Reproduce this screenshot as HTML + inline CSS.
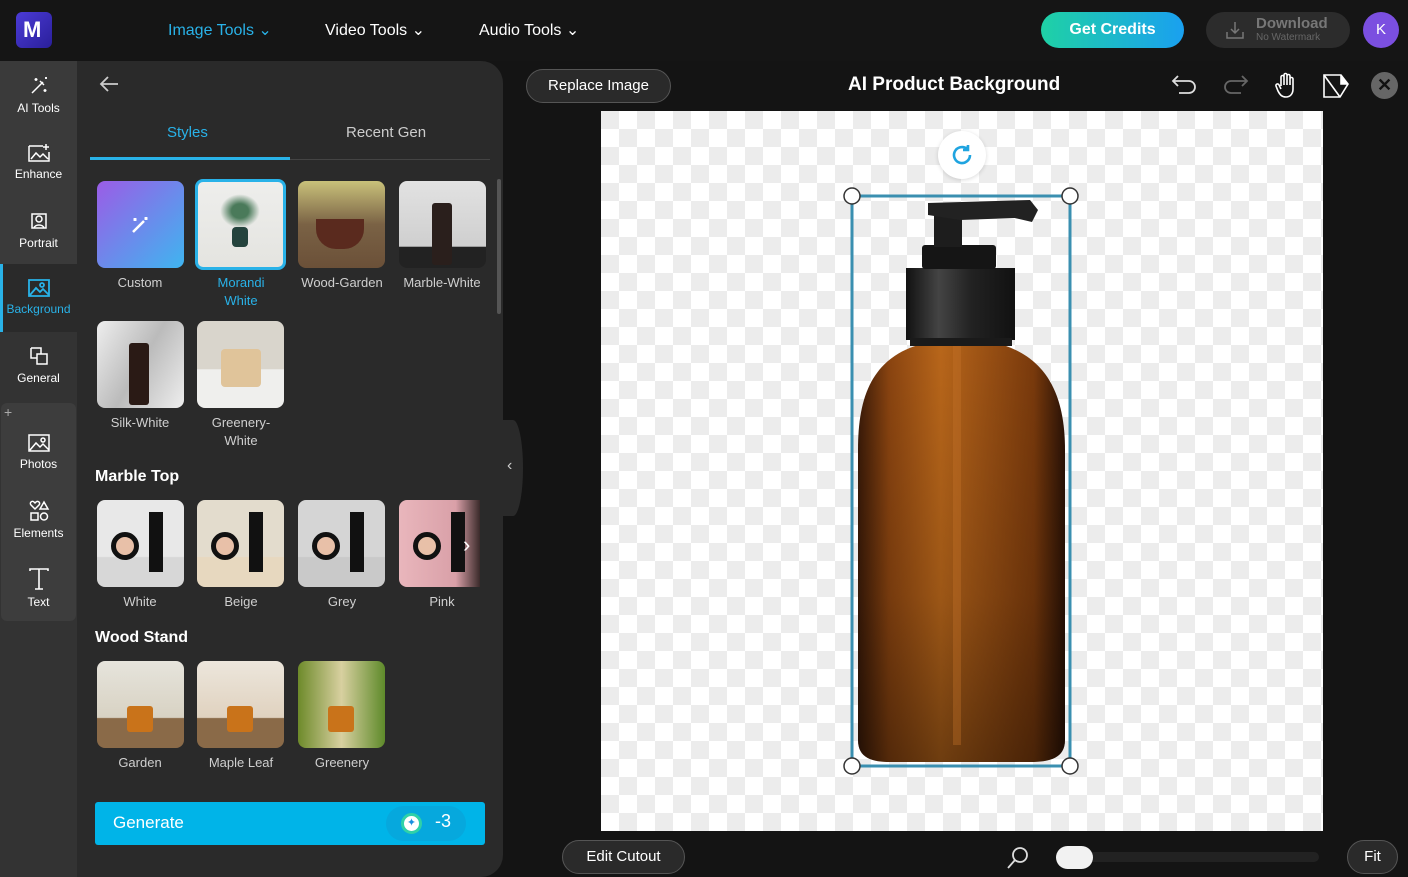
<!DOCTYPE html>
<html><head><meta charset="utf-8"><style>
*{box-sizing:border-box;margin:0;padding:0}
body{width:1408px;height:877px;overflow:hidden;background:#141414;font-family:"Liberation Sans",sans-serif;color:#fff;position:relative}
.abs{position:absolute}
.top{left:0;top:0;width:1408px;height:61px;background:#151515}
.nav{top:20px;font-size:16px;color:#fff}
.rail{left:0;top:61px;width:77px;height:816px;background:#333333}
.ri{position:absolute;left:0;width:77px;text-align:center;font-size:12px;color:#fff}
.ri svg{display:block;margin:0 auto 4px}
.panel{left:77px;top:61px;width:426px;height:816px;background:#2a2a2a;border-top-right-radius:22px;border-bottom-right-radius:22px}
.th{position:absolute;width:87px;height:87px;border-radius:8px;overflow:hidden}
.lb{position:absolute;width:100px;text-align:center;font-size:13px;color:#cfcfcf;line-height:18px}
.h{position:absolute;font-size:16px;font-weight:bold;color:#fff}
.pill{position:absolute;border:1px solid #555;border-radius:18px;background:#2a2a2a;color:#fff;font-size:15px;text-align:center}
.canvas{left:601px;top:111px;width:722px;height:720px;background:conic-gradient(#fff 25%,#ececec 0 50%,#fff 0 75%,#ececec 0);background-size:36px 36px}
</style></head><body>
<div class="abs top"></div>
<div class="abs" style="left:16px;top:12px;width:36px;height:36px;border-radius:6px;background:linear-gradient(135deg,#4b3bd6,#2a1f9a)"><div style="position:absolute;left:7px;top:5px;font-weight:bold;font-size:22px;color:#fff">M</div></div>
<div class="abs nav" style="left:168px;color:#29b2e8">Image Tools ⌄</div>
<div class="abs nav" style="left:325px">Video Tools ⌄</div>
<div class="abs nav" style="left:479px">Audio Tools ⌄</div>
<div class="abs" style="left:1041px;top:12px;width:143px;height:36px;border-radius:18px;background:linear-gradient(90deg,#1fd1a5,#1aa0f0);text-align:center;line-height:36px;font-weight:bold;font-size:16px">Get Credits</div>
<div class="abs" style="left:1206px;top:12px;width:144px;height:36px;border-radius:18px;background:#2c2c2c"><svg class="abs" style="left:19px;top:8px" width="20" height="20" viewBox="0 0 20 20" fill="none" stroke="#777" stroke-width="1.5"><path d="M10 2v11M6 9l4 4 4-4M2 12v6h16v-6"/></svg><div class="abs" style="left:50px;top:3px;font-size:15px;font-weight:bold;color:#777">Download</div><div class="abs" style="left:50px;top:20px;font-size:10px;color:#666">No Watermark</div></div>
<div class="abs" style="left:1363px;top:12px;width:36px;height:36px;border-radius:50%;background:#7b4fe0;text-align:center;line-height:36px;font-size:15px">K</div>

<div class="abs rail"></div>
<div class="abs" style="left:0;top:61px;width:77px;height:203px;background:#3a3a3a"></div>
<div class="ri" style="top:75px"><svg width="22" height="22" viewBox="0 0 22 22" fill="none" stroke="#fff" stroke-width="1.5"><path d="M4 18L15 7M12 6l4 4M8 3v3M6.5 4.5h3M17 14v3M15.5 15.5h3M18 2v2M17 3h2"/></svg>AI Tools</div>
<div class="ri" style="top:143px"><svg width="24" height="20" viewBox="0 0 24 20" fill="none" stroke="#fff" stroke-width="1.5"><path d="M2 3h14M2 3v15h20V9M4 16l5-6 4 4 3-3 5 5M19 1v6M16 4h6"/></svg>Enhance</div>
<div class="ri" style="top:210px"><svg width="22" height="22" viewBox="0 0 22 22" fill="none" stroke="#fff" stroke-width="1.5"><circle cx="11" cy="9" r="3"/><path d="M4 4h14v14H4zM6 18c1-4 9-4 10 0"/></svg>Portrait</div>
<div class="abs" style="left:0;top:264px;width:77px;height:68px;background:#2a2a2a;border-left:3px solid #29b2e8"></div>
<div class="ri" style="top:278px;color:#29b2e8"><svg width="24" height="20" viewBox="0 0 24 20" fill="none" stroke="#29b2e8" stroke-width="1.8"><path d="M2 2h20v16H2zM3 17l6-7 4 4 3-3 6 6"/><circle cx="15" cy="7" r="2"/></svg>Background</div>
<div class="ri" style="top:345px"><svg width="22" height="22" viewBox="0 0 22 22" fill="none" stroke="#fff" stroke-width="1.5"><path d="M3 3h10v6M3 3v10h6M9 9h10v10H9z"/></svg>General</div>
<div class="abs" style="left:1px;top:403px;width:75px;height:218px;background:#3d3d3d;border-radius:6px"></div>
<div class="abs" style="left:4px;top:404px;color:#aaa;font-size:14px">+</div>
<div class="ri" style="top:433px"><svg width="24" height="20" viewBox="0 0 24 20" fill="none" stroke="#fff" stroke-width="1.5"><path d="M2 2h20v16H2zM3 17l6-7 4 4 3-3 6 6"/><circle cx="16" cy="7" r="2"/></svg>Photos</div>
<div class="ri" style="top:500px"><svg width="22" height="22" viewBox="0 0 22 22" fill="none" stroke="#fff" stroke-width="1.5"><path d="M7 9L3 5a2 2 0 013-3l1 1 1-1a2 2 0 013 3zM16 2l4 7h-8zM3 13h7v7H3z"/><circle cx="16" cy="16.5" r="3.5"/></svg>Elements</div>
<div class="ri" style="top:567px"><svg width="22" height="24" viewBox="0 0 22 24" fill="none" stroke="#fff" stroke-width="1.6"><path d="M2 4V2h18v2M11 2v20M7 22h8"/></svg>Text</div>

<div class="abs panel"></div>
<svg class="abs" style="left:98px;top:74px" width="22" height="20" viewBox="0 0 22 20" fill="none" stroke="#ccc" stroke-width="1.8"><path d="M20 10H3M10 3L3 10l7 7"/></svg>
<div class="abs" style="left:167px;top:124px;font-size:15px;color:#29b2e8">Styles</div>
<div class="abs" style="left:346px;top:124px;font-size:15px;color:#ccc">Recent Gen</div>
<div class="abs" style="left:90px;top:159px;width:400px;height:1px;background:#444"></div>
<div class="abs" style="left:90px;top:157px;width:200px;height:3px;background:#29b2e8"></div>
<div class="abs" style="left:497px;top:179px;width:4px;height:135px;background:#555;border-radius:2px"></div>

<div class="th" style="left:97px;top:181px;background:linear-gradient(135deg,#9b5ce6,#3fb5f0)"><svg style="position:absolute;left:32px;top:33px" width="22" height="22" viewBox="0 0 22 22" fill="none" stroke="#fff" stroke-width="2.5"><path d="M4 18L15 7M6 4v3M4.5 5.5h3M17 3v3M15.5 4.5h3"/></svg></div>
<div class="lb" style="left:90px;top:274px">Custom</div>
<div class="th" style="left:195px;top:179px;width:91px;height:91px;border:3px solid #29b2e8;background:linear-gradient(#eeeeec,#e4e4e0)"><div style="position:absolute;left:34px;top:45px;width:16px;height:20px;background:#24433d;border-radius:4px"></div><div style="position:absolute;left:22px;top:12px;width:40px;height:34px;border-radius:50%;background:radial-gradient(#4a7a5a 30%,transparent 70%)"></div></div>
<div class="lb" style="left:191px;top:274px;color:#29b2e8">Morandi<br>White</div>
<div class="th" style="left:298px;top:181px;background:linear-gradient(#c9c17a,#7a6245 50%,#6b5038)"><div style="position:absolute;left:18px;top:38px;width:48px;height:30px;border-radius:0 0 20px 20px;background:#5a2a1e"></div></div>
<div class="lb" style="left:292px;top:274px">Wood-Garden</div>
<div class="th" style="left:399px;top:181px;background:linear-gradient(#e2e2e2,#cfcfcf 75%,#222 76%)"><div style="position:absolute;left:33px;top:22px;width:20px;height:62px;background:#2a1f1c;border-radius:3px"></div></div>
<div class="lb" style="left:392px;top:274px">Marble-White</div>

<div class="th" style="left:97px;top:321px;background:linear-gradient(120deg,#eee,#bbb,#eee)"><div style="position:absolute;left:32px;top:22px;width:20px;height:62px;background:#2a1a15;border-radius:3px"></div></div>
<div class="lb" style="left:90px;top:414px">Silk-White</div>
<div class="th" style="left:197px;top:321px;background:linear-gradient(#d9d5cc 55%,#efefed 56%)"><div style="position:absolute;left:24px;top:28px;width:40px;height:38px;background:#e0c49a;border-radius:4px"></div></div>
<div class="lb" style="left:191px;top:414px">Greenery-<br>White</div>

<div class="h" style="left:95px;top:468px">Marble Top</div>
<div class="th" style="left:97px;top:500px;background:linear-gradient(#e8e8e8 65%,#d7d7d7 66%)"><div style="position:absolute;left:52px;top:12px;width:14px;height:60px;background:#111"></div><div style="position:absolute;left:14px;top:32px;width:28px;height:28px;border-radius:50%;border:5px solid #111;background:#e8c0a8"></div></div>
<div class="lb" style="left:90px;top:593px">White</div>
<div class="th" style="left:197px;top:500px;background:linear-gradient(#e3dccd 65%,#e7d8bf 66%)"><div style="position:absolute;left:52px;top:12px;width:14px;height:60px;background:#111"></div><div style="position:absolute;left:14px;top:32px;width:28px;height:28px;border-radius:50%;border:5px solid #111;background:#e8c0a8"></div></div>
<div class="lb" style="left:191px;top:593px">Beige</div>
<div class="th" style="left:298px;top:500px;background:linear-gradient(#d5d5d5 65%,#c9c9c9 66%)"><div style="position:absolute;left:52px;top:12px;width:14px;height:60px;background:#111"></div><div style="position:absolute;left:14px;top:32px;width:28px;height:28px;border-radius:50%;border:5px solid #111;background:#e8c0a8"></div></div>
<div class="lb" style="left:292px;top:593px">Grey</div>
<div class="th" style="left:399px;top:500px;width:81px;border-radius:8px 0 0 8px;background:linear-gradient(90deg,#e9b6bc,#d9a0a8 70%,#3a2a2a)"><div style="position:absolute;left:52px;top:12px;width:14px;height:60px;background:#111"></div><div style="position:absolute;left:14px;top:32px;width:28px;height:28px;border-radius:50%;border:5px solid #111;background:#e8c0a8"></div><div style="position:absolute;left:64px;top:32px;font-size:22px;color:#fff">›</div></div>
<div class="lb" style="left:392px;top:593px">Pink</div>

<div class="h" style="left:95px;top:629px">Wood Stand</div>
<div class="th" style="left:97px;top:661px;background:linear-gradient(#e6e4dc,#d8d2c3 65%,#8a6a48 66%)"><div style="position:absolute;left:30px;top:45px;width:26px;height:26px;background:#c9731a;border-radius:3px"></div></div>
<div class="lb" style="left:90px;top:754px">Garden</div>
<div class="th" style="left:197px;top:661px;background:linear-gradient(#ece6dc,#e0d2bf 65%,#8a6a48 66%)"><div style="position:absolute;left:30px;top:45px;width:26px;height:26px;background:#c9731a;border-radius:3px"></div></div>
<div class="lb" style="left:191px;top:754px">Maple Leaf</div>
<div class="th" style="left:298px;top:661px;background:linear-gradient(90deg,#6d8a2a,#d8d0a0 50%,#5e8a2a)"><div style="position:absolute;left:30px;top:45px;width:26px;height:26px;background:#c9731a;border-radius:3px"></div></div>
<div class="lb" style="left:292px;top:754px">Greenery</div>

<div class="abs" style="left:95px;top:802px;width:390px;height:43px;background:#00b4e8;border-radius:3px"><div class="abs" style="left:18px;top:11px;font-size:17px">Generate</div><div class="abs" style="left:291px;top:4px;width:80px;height:35px;border-radius:18px;background:#06a8dd"></div><div class="abs" style="left:306px;top:11px;width:21px;height:21px;border-radius:50%;background:#fff;border:3px solid #2fd1a8;color:#1a8fe0;font-size:11px;text-align:center;line-height:15px">✦</div><div class="abs" style="left:340px;top:9px;font-size:18px">-3</div></div>

<div class="abs" style="left:503px;top:420px;width:20px;height:96px;background:#2a2a2a;border-radius:0 50% 50% 0"></div>
<div class="abs" style="left:507px;top:457px;color:#ccc;font-size:16px">‹</div>

<div class="pill" style="left:526px;top:69px;width:145px;height:34px;line-height:32px">Replace Image</div>
<div class="abs" style="left:848px;top:74px;font-size:19px;font-weight:bold">AI Product Background</div>
<svg class="abs" style="left:1170px;top:72px" width="30" height="28" viewBox="0 0 30 28" fill="none" stroke="#ddd" stroke-width="1.8"><path d="M8 4L3 9l5 5M3 9h16a6 6 0 010 12H9"/></svg>
<svg class="abs" style="left:1220px;top:72px" width="30" height="28" viewBox="0 0 30 28" fill="none" stroke="#666" stroke-width="1.8"><path d="M22 4l5 5-5 5M27 9H11a6 6 0 000 12h10"/></svg>
<svg class="abs" style="left:1274px;top:72px" width="24" height="28" viewBox="0 0 24 28" fill="none" stroke="#fff" stroke-width="1.6"><path d="M7 14V5a1.5 1.5 0 013 0v8M10 12V3a1.5 1.5 0 013 0v10M13 12V4a1.5 1.5 0 013 0v9M16 13V7a1.5 1.5 0 013 0v10c0 5-3 8-7 8s-6-2-8-6l-2-5a1.5 1.5 0 013-1l2 4"/></svg>
<svg class="abs" style="left:1322px;top:72px" width="28" height="28" viewBox="0 0 28 28" fill="none" stroke="#fff" stroke-width="1.6"><path d="M2 3h17l7 9-8 13H2z"/><path d="M2 3l16 22" /><path d="M19 3v9h7" fill="#fff"/></svg>
<div class="abs" style="left:1371px;top:72px;width:27px;height:27px;border-radius:50%;background:#666;text-align:center;line-height:27px;font-size:18px;color:#111;font-weight:bold">✕</div>

<div class="abs canvas"></div>
<div class="abs" style="left:938px;top:131px;width:48px;height:48px;border-radius:50%;background:#fff;box-shadow:0 1px 4px rgba(0,0,0,.15)"><svg style="position:absolute;left:12px;top:12px" width="24" height="24" viewBox="0 0 24 24" fill="none" stroke="#1fa4e0" stroke-width="2.6"><path d="M20 12a8 8 0 11-3-6.2"/><path d="M18 2v5h-5" fill="#1fa4e0"/></svg></div>

<svg class="abs" style="left:840px;top:185px" width="250" height="595" viewBox="840 185 250 595">
<defs>
<linearGradient id="am" x1="0" x2="1"><stop offset="0" stop-color="#3a1a08"/><stop offset=".15" stop-color="#8a4410"/><stop offset=".4" stop-color="#b8661a"/><stop offset=".6" stop-color="#9c5214"/><stop offset=".85" stop-color="#7a3a0c"/><stop offset="1" stop-color="#2a1206"/></linearGradient>
<linearGradient id="cap" x1="0" x2="1"><stop offset="0" stop-color="#111"/><stop offset=".3" stop-color="#444"/><stop offset=".6" stop-color="#222"/><stop offset="1" stop-color="#111"/></linearGradient>
<linearGradient id="dk" x1="0" x2="0" y1="0" y2="1"><stop offset="0" stop-color="#000" stop-opacity="0"/><stop offset=".6" stop-color="#000" stop-opacity=".15"/><stop offset="1" stop-color="#000" stop-opacity=".4"/></linearGradient>
</defs>
<path d="M918 345 L1003 345 C1050 360 1065 400 1065 450 L1065 740 C1065 758 1050 762 1030 762 L890 762 C872 762 858 758 858 740 L858 450 C858 400 870 360 918 345Z" fill="url(#am)"/>
<path d="M918 345 L1003 345 C1050 360 1065 400 1065 450 L1065 740 C1065 758 1050 762 1030 762 L890 762 C872 762 858 758 858 740 L858 450 C858 400 870 360 918 345Z" fill="url(#dk)"/>
<rect x="953" y="345" width="8" height="400" fill="#c8762a" opacity=".35"/>
<rect x="906" y="268" width="109" height="72" fill="url(#cap)"/>
<rect x="910" y="338" width="102" height="8" fill="#1a1a1a"/>
<rect x="922" y="245" width="74" height="24" rx="3" fill="#151515"/>
<rect x="934" y="215" width="28" height="32" fill="#1d1d1d"/>
<path d="M928 203 L1030 200 L1038 210 L1032 222 L1015 218 L960 220 L928 215Z" fill="#222"/>
<rect x="852" y="196" width="218" height="570" fill="none" stroke="#3a8fb0" stroke-width="3"/>
<circle cx="852" cy="196" r="8" fill="#fff" stroke="#333" stroke-width="1.5"/>
<circle cx="1070" cy="196" r="8" fill="#fff" stroke="#333" stroke-width="1.5"/>
<circle cx="852" cy="766" r="8" fill="#fff" stroke="#333" stroke-width="1.5"/>
<circle cx="1070" cy="766" r="8" fill="#fff" stroke="#333" stroke-width="1.5"/>
</svg>

<div class="pill" style="left:562px;top:840px;width:123px;height:34px;line-height:32px">Edit Cutout</div>
<svg class="abs" style="left:1005px;top:844px" width="26" height="26" viewBox="0 0 26 26" fill="none" stroke="#ddd" stroke-width="1.8"><circle cx="15" cy="11" r="7"/><path d="M10 16l-7 8"/></svg>
<div class="abs" style="left:1057px;top:852px;width:262px;height:10px;border-radius:5px;background:#222"></div>
<div class="abs" style="left:1056px;top:846px;width:37px;height:23px;border-radius:12px;background:#f2f2f2"></div>
<div class="pill" style="left:1347px;top:840px;width:51px;height:34px;line-height:32px">Fit</div>
</body></html>
